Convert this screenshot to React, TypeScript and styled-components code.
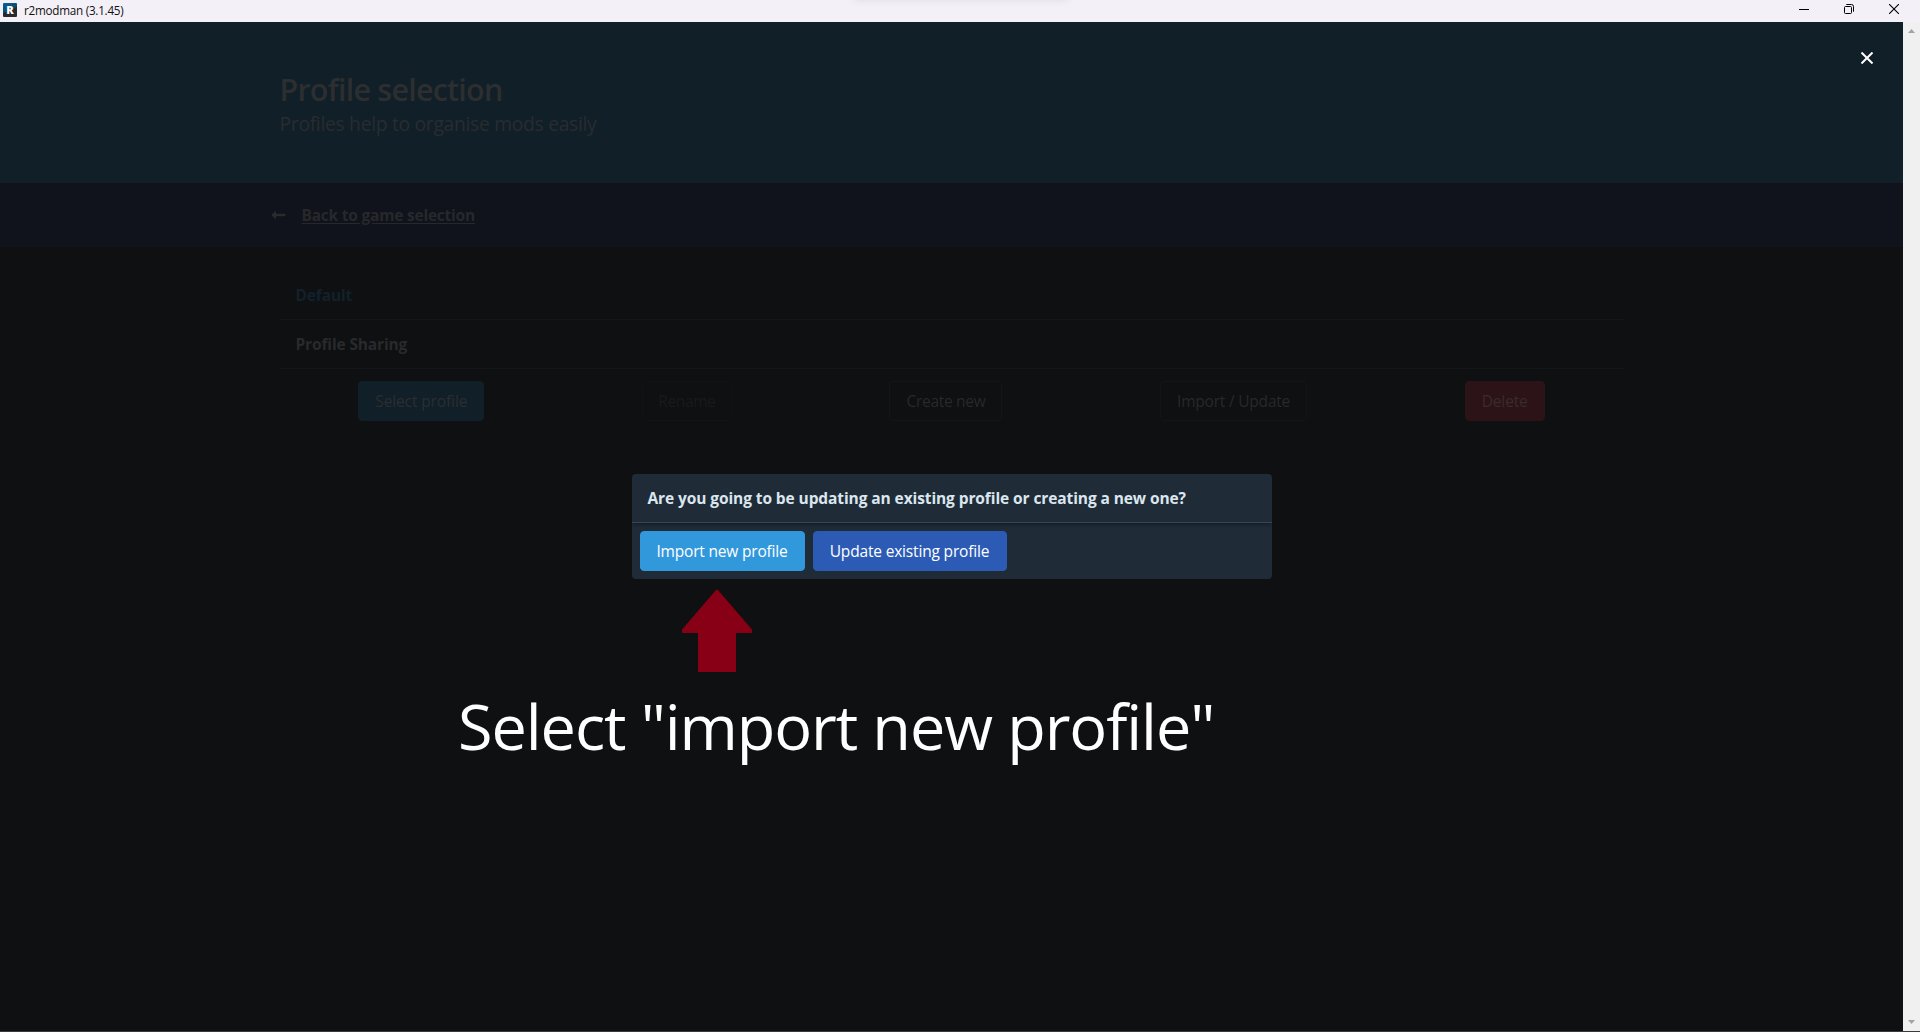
import React from "react";
import styled, { createGlobalStyle } from "styled-components";

const GlobalStyle = createGlobalStyle`
  * { box-sizing: border-box; }
  html, body { margin: 0; padding: 0; overflow: hidden; background: #0e1012; }
  body { font-family: "Open Sans", "Noto Sans", sans-serif; }
`;

const Window = styled.div`
  display: flex;
  flex-direction: column;
  width: 1920px;
  height: 1032px;
  border-bottom: 1px solid #3a3942;
  overflow: hidden;
`;

const TitleBar = styled.header`
  position: relative;
  display: flex;
  align-items: center;
  flex: 0 0 22px;
  padding: 0 21px 0 3px;
  background: #f3f0f7;
`;

const TopShade = styled.div`
  position: absolute;
  top: -8px;
  left: 854px;
  width: 214px;
  height: 4px;
  border-radius: 4px;
  box-shadow: 0 2px 9px rgba(60, 50, 70, 0.22);
`;

const AppBadge = styled.div`
  display: flex;
  align-items: center;
  justify-content: center;
  width: 14px;
  height: 14px;
  margin: -2px 7px 0 0;
  border-radius: 1px;
  background: linear-gradient(155deg, #08639a 0%, #0c4a70 48%, #26282c 52%, #2b2b2e 100%);
  color: #fff;
  font-size: 11px;
  font-weight: 800;
  line-height: 14px;
`;

const AppName = styled.div`
  margin-top: -2px;
  font-size: 11.7px;
  line-height: 16px;
  letter-spacing: -0.25px;
  color: #111;
`;

const WindowControls = styled.div`
  display: flex;
  gap: 35px;
  height: 10px;
  margin: -4px 0 0 auto;

  svg { display: block; }
`;

const Viewport = styled.div`
  display: flex;
  flex: 1;
  min-height: 0;
`;

const Page = styled.main`
  position: relative;
  width: 1903px;
  background: #0e1012;
`;

const Scrollbar = styled.aside`
  display: flex;
  flex-direction: column;
  justify-content: space-between;
  align-items: center;
  flex: 0 0 17px;
  padding: 7px 0;
  background: #f0f0f0;
`;

const Container = styled.div`
  width: 1344px;
  margin: 0 auto;
`;

const Hero = styled.section`
  height: 161px;
  padding-top: 47px;
  background: #111f28;
`;

const Title = styled.h1`
  margin: 0;
  font-size: 30.5px;
  font-weight: 600;
  line-height: 40px;
  letter-spacing: -0.78px;
  color: #2d2e2f;
`;

const Subtitle = styled.h2`
  margin: 0;
  font-size: 19.3px;
  font-weight: 400;
  line-height: 30px;
  letter-spacing: -0.3px;
  color: #292c2f;
`;

const BackBar = styled.nav`
  height: 64px;
  background: #10131b;
`;

const BackLink = styled.a`
  display: flex;
  align-items: center;
  gap: 16px;
  margin-left: -9px;
  height: 63px;
  color: #27282c;

  svg { display: block; flex: none; }
`;

const BackText = styled.span`
  font-size: 15.5px;
  font-weight: 700;
  line-height: 24px;
  letter-spacing: -0.216px;
  text-decoration: underline;
  text-underline-offset: 2px;
`;

const ProfileList = styled.ul`
  margin: 0;
  padding: 24px 0 0;
  list-style: none;
`;

const ProfileRow = styled.li<{ $active?: boolean }>`
  height: 49px;
  padding: 12px 16px;
  border-bottom: 1px solid #15171a;
  font-size: 15.5px;
  font-weight: 700;
  line-height: 24px;
  letter-spacing: -0.14px;
  color: ${(p) => (p.$active ? "#12212c" : "#292a2b")};
`;

const Actions = styled.div`
  display: flex;
  justify-content: space-around;
  margin-top: 12px;
`;

type Tone = "primary" | "ghost" | "disabled" | "danger" | "info" | "link";

const tones: Record<Tone, [string, string, string]> = {
  primary: ["#111f28", "#111f28", "#2b2e30"],
  ghost: ["transparent", "#131518", "#27292a"],
  disabled: ["transparent", "#111315", "#191a1c"],
  danger: ["#2c1318", "#2c1318", "#3a2b2d"],
  info: ["#3298dc", "#3298dc", "#ffffff"],
  link: ["#2c5bb6", "#2c5bb6", "#ffffff"],
};

const Button = styled.button<{ $tone: Tone; $width: number; $tracking: number }>`
  display: flex;
  align-items: center;
  justify-content: center;
  flex: none;
  width: ${(p) => p.$width}px;
  height: 40px;
  padding: 0;
  border: 1px solid ${(p) => tones[p.$tone][1]};
  border-radius: 4px;
  background: ${(p) => tones[p.$tone][0]};
  color: ${(p) => tones[p.$tone][2]};
  font-family: inherit;
  font-size: 15.5px;
  line-height: 24px;
  letter-spacing: ${(p) => p.$tracking}px;
  white-space: nowrap;
`;

const ModalLayer = styled.div`
  position: absolute;
  inset: 0;
  display: flex;
  align-items: center;
  justify-content: center;
`;

const CloseButton = styled.div`
  position: absolute;
  top: 30px;
  right: 30px;

  svg { display: block; }
`;

const Card = styled.div`
  width: 640px;
  border-radius: 4px;
  background: #1f2c38;
  overflow: hidden;
`;

const CardHeader = styled.div`
  height: 49px;
  padding: 12px 16px;
  border-bottom: 1px solid #364659;
  box-shadow: 0 2px 3px rgba(10, 10, 10, 0.4);
  color: #dbe6ee;
  font-size: 15.5px;
  font-weight: 700;
  line-height: 24px;
  letter-spacing: -0.095px;
`;

const CardFooter = styled.div`
  display: flex;
  gap: 8px;
  padding: 8px;
`;

const Pointer = styled.svg`
  position: absolute;
  left: 681px;
  top: 567px;
`;

const Caption = styled.p`
  position: absolute;
  left: 458px;
  top: 661px;
  margin: 0;
  color: #fff;
  font-size: 63px;
  line-height: 86px;
  letter-spacing: -1.08px;
  white-space: nowrap;
`;

const ScrollArrow = ({ down }: { down?: boolean }) => (
  <svg width="7" height="4" viewBox="0 0 7 4" fill="#a3a3a3">
    <path d={down ? "M0 0h7L3.5 4z" : "M0 4h7L3.5 0z"} />
  </svg>
);

export default function App() {
  return (
    <Window>
      <GlobalStyle />
      <TitleBar>
        <TopShade />
        <AppBadge>R</AppBadge>
        <AppName>r2modman (3.1.45)</AppName>
        <WindowControls>
          <svg width="10" height="10" viewBox="0 0 10 10">
            <path d="M0 5.5h10" stroke="#000" />
          </svg>
          <svg width="10" height="10" viewBox="0 0 10 10" fill="none" stroke="#000">
            <rect x="0.5" y="2.5" width="7" height="7" rx="1" />
            <path d="M2.3 0.5H7.5a2 2 0 0 1 2 2V7.7" />
          </svg>
          <svg width="10" height="10" viewBox="0 0 10 10" stroke="#000" strokeWidth="1.1">
            <path d="M0 0L10 10M10 0L0 10" />
          </svg>
        </WindowControls>
      </TitleBar>
      <Viewport>
        <Page>
          <Hero>
            <Container>
              <Title>Profile selection</Title>
              <Subtitle>Profiles help to organise mods easily</Subtitle>
            </Container>
          </Hero>
          <BackBar>
            <Container>
              <BackLink>
                <svg width="15" height="8" viewBox="0 0 15 8" fill="#2a2b2e">
                  <path d="M0.3 4L4.2 0.3Q5 0 5 1V2.8H14.5V5.2H5V7Q5 8 4.2 7.7Z" />
                </svg>
                <BackText>Back to game selection</BackText>
              </BackLink>
            </Container>
          </BackBar>
          <Container>
            <ProfileList>
              <ProfileRow $active>Default</ProfileRow>
              <ProfileRow>Profile Sharing</ProfileRow>
            </ProfileList>
          </Container>
          <Container>
            <Actions>
              <Button $tone="primary" $width={126} $tracking={-0.12}>Select profile</Button>
              <Button $tone="disabled" $width={90} $tracking={-0.4}>Rename</Button>
              <Button $tone="ghost" $width={113} $tracking={-0.29}>Create new</Button>
              <Button $tone="ghost" $width={147} $tracking={-0.21}>Import / Update</Button>
              <Button $tone="danger" $width={80} $tracking={-0.13}>Delete</Button>
            </Actions>
          </Container>
          <ModalLayer>
            <Card>
              <CardHeader>
                Are you going to be updating an existing profile or creating a new one?
              </CardHeader>
              <CardFooter>
                <Button $tone="info" $width={165} $tracking={-0.19}>Import new profile</Button>
                <Button $tone="link" $width={194} $tracking={-0.17}>Update existing profile</Button>
              </CardFooter>
            </Card>
            <CloseButton>
              <svg width="12" height="12" viewBox="0 0 12 12" stroke="#fff" strokeWidth="2">
                <path d="M0.5 0.5L11.5 11.5M11.5 0.5L0.5 11.5" />
              </svg>
            </CloseButton>
            <Pointer width="72" height="84" viewBox="0 0 72 84">
              <path
                d="M36 1.5L70 41V43H54V82H18V43H2V41Z"
                fill="#880015"
                stroke="#880015"
                strokeWidth="2"
                strokeLinejoin="round"
              />
            </Pointer>
            <Caption>Select "import new profile"</Caption>
          </ModalLayer>
        </Page>
        <Scrollbar>
          <ScrollArrow />
          <ScrollArrow down />
        </Scrollbar>
      </Viewport>
    </Window>
  );
}
